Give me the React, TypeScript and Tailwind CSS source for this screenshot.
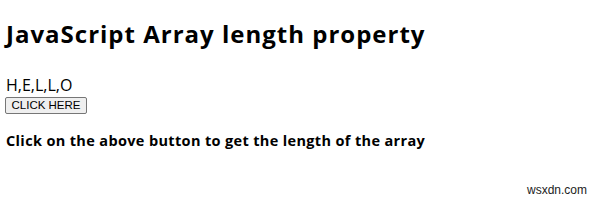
export default function App() {
  return (
    <div className="relative w-[600px] h-[201px] bg-white text-black overflow-hidden font-['Open_Sans',sans-serif]">
      <div className="pl-[6px] pt-[20px]">
        <h1 className="text-[24px] leading-[28px] font-bold tracking-[1px]">JavaScript Array length property</h1>
        <p className="mt-[27px] text-[16px] leading-[20px] font-medium">H,E,L,L,O</p>
        <button className="mt-[2px] ml-[-1px] flex items-center justify-center h-[17px] w-[82px] border border-[#767676] bg-[#efefef] rounded-[2px] text-[11.5px] leading-[15px] font-['Liberation_Sans',sans-serif]">
          CLICK HERE
        </button>
        <p className="mt-[17px] text-[14.5px] leading-[20px] font-bold tracking-[0.35px]">Click on the above button to get the length of the array</p>
      </div>
      <div className="absolute left-[527px] top-[183px] text-[12px] leading-[14px] text-[#222] font-['Liberation_Sans',sans-serif]">wsxdn.com</div>
    </div>
  );
}
